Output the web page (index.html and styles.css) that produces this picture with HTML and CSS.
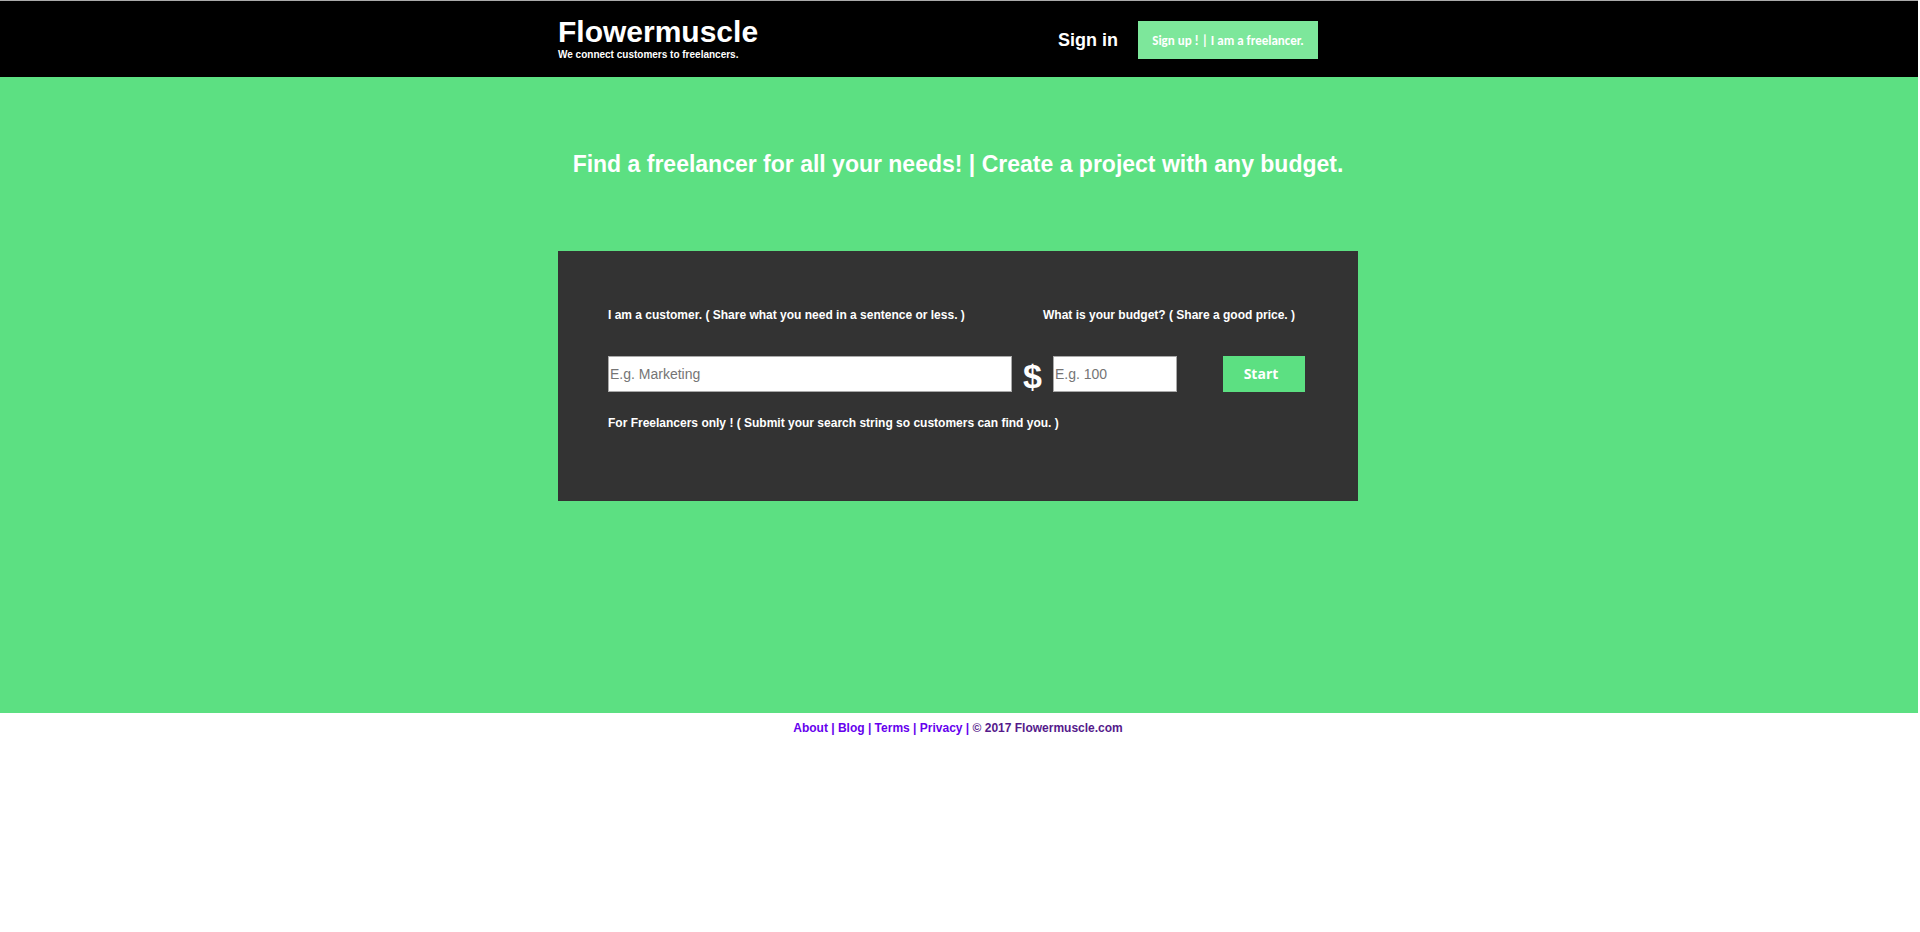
FILE: index.html
```html
<!DOCTYPE html>
<html lang="en">
<head>
    <meta charset="UTF-8">
    <meta name="viewport" content="width=device-width, initial-scale=1.0">
    <title>Flowermuscle</title>
    <link rel="stylesheet" href="styles.css">
</head>
<body>
    <header class="header">
        <div class="container header-inner">
            <div class="brand">
                <a href="#" class="logo">Flowermuscle</a>
                <p class="tagline">We connect customers to freelancers.</p>
            </div>
            <nav class="header-nav">
                <a href="#" class="sign-in">Sign in</a>
                <button type="button" class="sign-up">Sign up ! | I am a freelancer.</button>
            </nav>
        </div>
    </header>

    <main class="main">
        <h1>Find a freelancer for all your needs! | Create a project with any budget.</h1>

        <!-- Project form -->
        <form class="container project-form">
            <div class="labels">
                <label for="need">I am a customer. ( Share what you need in a sentence or less. )</label>
                <label for="budget">What is your budget? ( Share a good price. )</label>
            </div>
            <div class="fields">
                <input type="text" id="need" class="need" placeholder="E.g. Marketing">
                <span class="currency">$</span>
                <input type="text" id="budget" class="budget" placeholder="E.g. 100">
                <button type="submit" class="start">Start</button>
            </div>
            <a href="#" class="freelancer-link">For Freelancers only ! ( Submit your search string so customers can find you. )</a>
        </form>
    </main>

    <footer class="footer">
        <a href="#">About |</a>
        <a href="#">Blog |</a>
        <a href="#">Terms |</a>
        <a href="#">Privacy |</a>
        <a href="#" class="copyright">© 2017 Flowermuscle.com</a>
    </footer>
</body>
</html>
```

FILE: styles.css
```css
body {
    font-family: Arial, "Liberation Sans", sans-serif;
    margin: 0 2px 0 0;
    background-color: white;
}

a {
    color: white;
    text-decoration: none;
}

.container {
    box-sizing: border-box;
    width: 100%;
    max-width: 800px;
    margin: 0 auto;
}

.header {
    padding-right: 2px;
    background-color: black;
    border-top: 1px solid #aaa;
}

.header-inner {
    display: flex;
    justify-content: space-between;
    align-items: center;
    height: 76px;
    padding-right: 40px;
}

.brand {
    padding-bottom: 4px;
}

.logo {
    display: block;
    font-size: 30px;
    line-height: 36px;
    font-weight: bold;
}

.tagline {
    margin: 0;
    color: white;
    font-size: 10px;
    line-height: 10px;
    font-weight: bold;
}

.header-nav {
    display: flex;
    align-items: center;
    gap: 20px;
    padding-top: 2px;
}

.sign-in {
    font-size: 18px;
    font-weight: bold;
}

.sign-up {
    width: 180px;
    height: 38px;
    padding: 0;
    border: none;
    background-color: #7de79b;
    color: white;
    font-family: Calibri, Lato, sans-serif;
    font-size: 13px;
    font-weight: bold;
    cursor: pointer;
}

.main {
    background-color: #5ce082;
    padding: 73px 2px 212px 0;
}

h1 {
    margin: 0 0 73px;
    color: white;
    font-size: 23px;
    line-height: 28px;
    text-align: center;
}

.project-form {
    padding: 56px 50px 70px;
    background-color: #333;
    font-size: 12px;
    line-height: 16px;
    font-weight: bold;
}

.labels {
    display: flex;
    justify-content: space-between;
    margin-bottom: 33px;
    padding-right: 13px;
    color: white;
}

.fields {
    display: flex;
    align-items: center;
    height: 36px;
    margin-bottom: 23px;
}

.fields input {
    box-sizing: border-box;
    height: 36px;
    padding: 1px;
    border: 1px solid #a9a9a9;
    font-family: Arial, "Liberation Sans", sans-serif;
    font-size: 14px;
}

.fields input::placeholder {
    color: #757575;
}

.need {
    width: 404px;
}

.currency {
    width: 41px;
    padding-top: 4px;
    color: white;
    font-size: 34px;
    line-height: 36px;
    text-align: center;
}

.budget {
    width: 124px;
}

.start {
    width: 82px;
    height: 36px;
    margin-left: 46px;
    padding: 0 6px 2px 0;
    border: none;
    background-color: #5ce082;
    color: white;
    font-family: "Open Sans", sans-serif;
    font-size: 14px;
    font-weight: bold;
    cursor: pointer;
}

.footer {
    padding: 7px 2px 7px 0;
    font-size: 12px;
    line-height: 16px;
    font-weight: bold;
    text-align: center;
}

.footer a {
    color: #60e;
}

.footer .copyright {
    color: #551a8b;
}
```
